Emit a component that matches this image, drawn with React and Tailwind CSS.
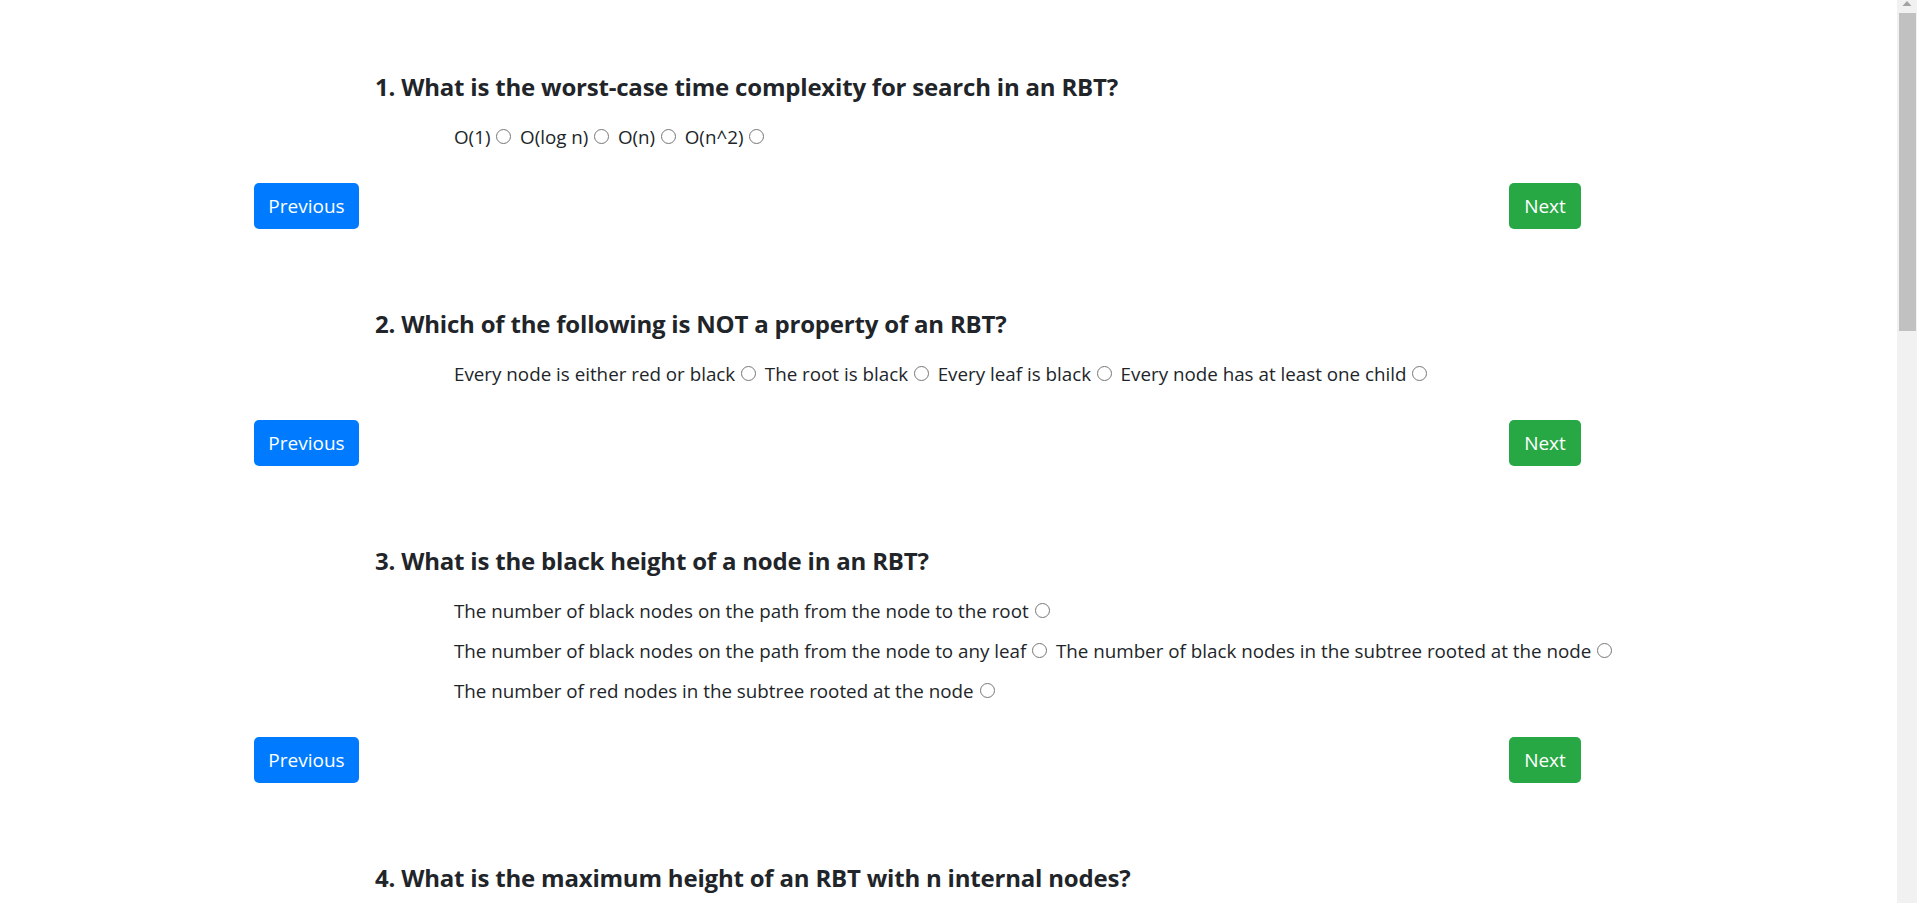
import React from "react";

const questions = [
  {
    q: "What is the worst-case time complexity for search in an RBT?",
    options: ["O(1)", "O(log n)", "O(n)", "O(n^2)"],
  },
  {
    q: "Which of the following is NOT a property of an RBT?",
    options: [
      "Every node is either red or black",
      "The root is black",
      "Every leaf is black",
      "Every node has at least one child",
    ],
  },
  {
    q: "What is the black height of a node in an RBT?",
    options: [
      "The number of black nodes on the path from the node to the root",
      "The number of black nodes on the path from the node to any leaf",
      "The number of black nodes in the subtree rooted at the node",
      "The number of red nodes in the subtree rooted at the node",
    ],
  },
  {
    q: "What is the maximum height of an RBT with n internal nodes?",
    options: ["log n", "2log(n+1)", "n", "n/2"],
  },
  {
    q: "What color is a newly inserted node in an RBT?",
    options: ["Red", "Black", "Either red or black", "It depends on the parent"],
  },
  {
    q: "Which operation is used to restore the RBT properties after insertion?",
    options: ["Rotation and recoloring", "Splitting", "Merging", "Hashing"],
  },
  {
    q: "What is the worst-case time complexity for insertion in an RBT?",
    options: ["O(1)", "O(log n)", "O(n)", "O(n log n)"],
  },
  {
    q: "Which of the following trees is an RBT equivalent to?",
    options: ["2-3-4 tree", "AVL tree", "Binary heap", "Trie"],
  },
  {
    q: "What is the worst-case time complexity for deletion in an RBT?",
    options: ["O(1)", "O(log n)", "O(n)", "O(n^2)"],
  },
  {
    q: "How many rotations at most are needed to fix an RBT after insertion?",
    options: ["1", "2", "3", "O(log n)"],
  },
];

function Question({ index, data }) {
  return (
    <section className="pl-[254px] mb-[80px] last:mb-[49px]">
      <h5 className="ml-[121px] text-[24px] tracking-[-0.2px] leading-[29px] font-bold">
        {index + 1}. {data.q}
      </h5>
      <div className="ml-[200px] mt-[22px] w-[1190px] flex flex-wrap gap-x-[5px] gap-y-[11px] text-[18.8px] leading-[29px]">
        {data.options.map((o) => (
          <label key={o} className="whitespace-nowrap">
            {o}
            <input
              type="radio"
              name={`q${index}`}
              className="ml-[6px] mr-[3.6px] mt-[4px] mb-[2px] w-[15px] h-[15px] align-baseline"
            />
          </label>
        ))}
      </div>
      <div className="mt-[31px] w-[1327px] flex justify-between">
        <button className="w-[105px] h-[46px] rounded-[5px] bg-[#007bff] text-white text-[19px] leading-[29px]">
          Previous
        </button>
        <button className="w-[72px] h-[46px] rounded-[5px] bg-[#28a745] text-white text-[19px] leading-[29px]">
          Next
        </button>
      </div>
    </section>
  );
}

function FakeScrollbar() {
  return (
    <div
      aria-hidden="true"
      className="fixed top-0 right-0 h-screen w-[20px] bg-[#f1f1f1] flex flex-col items-center"
    >
      <svg width="10" height="13" viewBox="0 0 10 13" className="shrink-0">
        <path d="M5 1 L9.5 6 L0.5 6 Z" fill="#a3a3a3" />
      </svg>
      <div className="ml-[1px] w-[17px] h-[318px] bg-[#c1c1c1]" />
    </div>
  );
}

export default function App() {
  return (
    <div className="bg-white text-[#212529] font-['Open_Sans',sans-serif] pt-[72px]">
      {questions.map((d, i) => (
        <Question key={i} index={i} data={d} />
      ))}
      <FakeScrollbar />
    </div>
  );
}
